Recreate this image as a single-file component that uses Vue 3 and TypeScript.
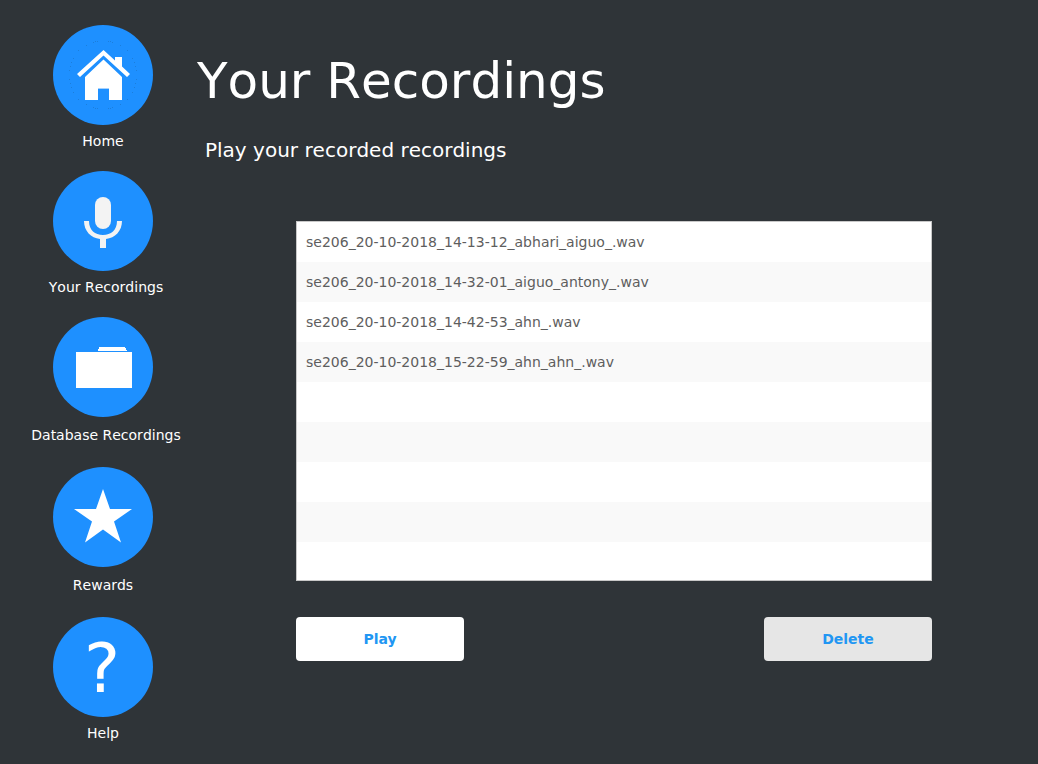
<script setup lang="ts">
import { ref } from 'vue'

interface NavItem {
  id: 'home' | 'recordings' | 'database' | 'rewards' | 'help'
  label: string
  roomy?: boolean
  long?: boolean
}

const navItems: NavItem[] = [
  { id: 'home', label: 'Home' },
  { id: 'recordings', label: 'Your Recordings', long: true },
  { id: 'database', label: 'Database Recordings', roomy: true, long: true },
  { id: 'rewards', label: 'Rewards', roomy: true },
  { id: 'help', label: 'Help' },
]

const recordings = ref<string[]>([
  'se206_20-10-2018_14-13-12_abhari_aiguo_.wav',
  'se206_20-10-2018_14-32-01_aiguo_antony_.wav',
  'se206_20-10-2018_14-42-53_ahn_.wav',
  'se206_20-10-2018_15-22-59_ahn_ahn_.wav',
])

const dotAngles = [73, 78, 81, 99, 102, 107, 8, 15, 22, 158, 165, 172, 30, 45, 60, 120, 135, 150]
const dots = dotAngles.flatMap((angle) =>
  [1, -1].map((side) => ({
    x: Math.round(49.5 + 34 * Math.cos((angle * Math.PI) / 180)),
    y: Math.round(49.5 + 34 * side * Math.sin((angle * Math.PI) / 180)),
  })),
)
</script>

<template>
  <div class="app">
    <nav class="sidebar" aria-label="Main">
      <div v-for="item in navItems" :key="item.id" class="nav-item" :class="{ roomy: item.roomy, long: item.long }">
        <button type="button" class="circle" :aria-labelledby="`nav-${item.id}`">
          <svg v-if="item.id === 'home'" viewBox="0 0 100 100" aria-hidden="true">
            <rect v-for="(dot, i) in dots" :key="i" :x="dot.x" :y="dot.y" width="1" height="1" fill="#1b7edc" />
            <path d="M50.5 25 L62 35.5 V32 H69 V41.5 L77 49 L74 52 L50.5 30.5 L27 52 L24 49 Z" fill="#fff" />
            <path d="M50.5 34.5 L69 52 V75 H56 V63 H45 V75 H32 V52 Z" fill="#fff" />
            <rect x="45" y="63" width="11" height="1" fill="#a5d2ff" />
          </svg>
          <svg v-else-if="item.id === 'recordings'" viewBox="0 0 100 100" aria-hidden="true">
            <rect x="42" y="26" width="16" height="32" rx="8" fill="#f3f3f3" />
            <path d="M31 50 H36 C36 59 42 64 50 64 S64 59 64 50 H69 C69 60 62 67 53 68 V77 H47 V68 C38 67 31 60 31 50 Z" fill="#f3f3f3" />
          </svg>
          <svg v-else-if="item.id === 'database'" viewBox="0 0 100 100" shape-rendering="crispEdges" aria-hidden="true">
            <path d="M46 30 H72 V31 H73 V33 H74 V34 H45 V32 H46 Z M23 35 H79 V71 H23 Z" fill="#fff" />
          </svg>
          <svg v-else-if="item.id === 'rewards'" viewBox="0 0 100 100" aria-hidden="true">
            <path d="M50 22 L57 42 H79 L61 54.5 L68 75.5 L50 62.5 L32 75.5 L39 54.5 L21 42 H43 Z" fill="#fff" />
          </svg>
          <span v-else class="question" aria-hidden="true">?</span>
        </button>
        <span :id="`nav-${item.id}`" class="nav-label">{{ item.label }}</span>
      </div>
    </nav>

    <main class="content">
      <h1>Your Recordings</h1>
      <p class="subtitle">Play your recorded recordings</p>
      <section class="panel">
        <ul class="list" aria-label="Recordings">
          <li v-for="name in recordings" :key="name">{{ name }}</li>
        </ul>
        <div class="actions">
          <button type="button" class="action play">Play</button>
          <button type="button" class="action delete">Delete</button>
        </div>
      </section>
    </main>
  </div>
</template>

<style>
body {
  margin: 0;
  background: #2f3438;
}
</style>

<style scoped>
.app {
  display: flex;
  min-height: 100vh;
  box-sizing: border-box;
  background: #2f3438;
  color: #fff;
  font-family: "DejaVu Sans", sans-serif;
  font-size: 14px;
  font-kerning: none;
}

.sidebar {
  display: flex;
  flex-direction: column;
  gap: 20px;
  flex: 0 0 188px;
  padding: 25px 0 0 9px;
}

.nav-item {
  display: flex;
  flex-direction: column;
  align-items: center;
  gap: 6px;
}

.nav-item.roomy {
  gap: 8px;
  padding-bottom: 2px;
}

.circle {
  display: flex;
  align-items: center;
  justify-content: center;
  width: 100px;
  height: 100px;
  padding: 0;
  border: 0;
  border-radius: 50%;
  background: #1e90ff;
  color: #fff;
  font-family: inherit;
  cursor: pointer;
}

.circle svg {
  display: block;
  width: 100%;
  height: 100%;
}

.question {
  padding: 4px 2px 0 0;
  font-size: 68px;
  line-height: 96px;
}

.nav-label {
  line-height: 20px;
  white-space: nowrap;
}

.long .nav-label {
  padding-left: 6px;
}

.content {
  flex: 1;
  min-width: 0;
  padding-top: 51px;
}

h1 {
  margin: 0;
  font-size: 50px;
  font-weight: 400;
  line-height: 60px;
}

.subtitle {
  margin: 27px 0 0;
  padding-left: 8px;
  font-size: 20px;
  line-height: 24px;
}

.panel {
  margin: 59px 106px 0 99px;
}

.list {
  height: 358px;
  margin: 0;
  padding: 0;
  overflow: auto;
  border: 1px solid #c8c8c8;
  background: repeating-linear-gradient(#fff 0 40px, #f9f9f9 40px 80px);
  color: #5e5e5e;
  list-style: none;
}

.list li {
  padding: 0 9px;
  line-height: 40px;
}

.actions {
  display: flex;
  justify-content: space-between;
  margin-top: 36px;
}

.action {
  width: 168px;
  height: 44px;
  border: 0;
  border-radius: 4px;
  color: #2196f3;
  font-family: inherit;
  font-size: 14px;
  font-weight: 700;
  cursor: pointer;
}

.play {
  background: #fff;
}

.delete {
  background: #e6e6e6;
}
</style>
